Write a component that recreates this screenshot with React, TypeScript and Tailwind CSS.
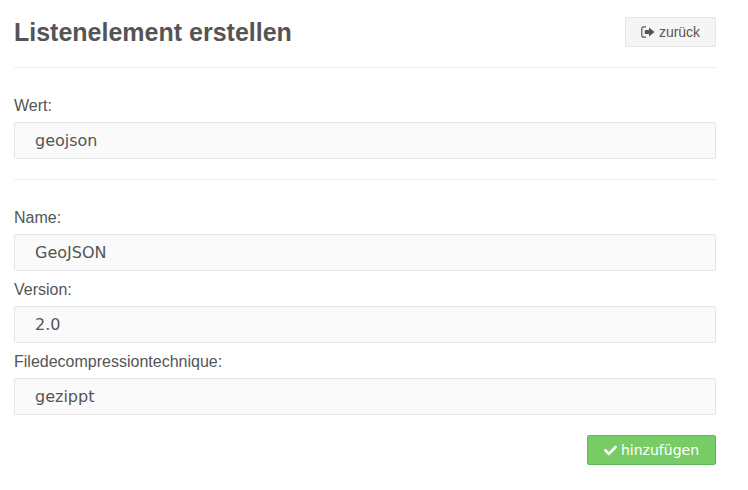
import { FaCheck } from "react-icons/fa";

// fa-sign-out (FontAwesome 4): open box with arrow pointing right
function SignOutIcon() {
  return (
    <svg viewBox="0 0 14 12" className="h-[12px] w-[14px]" fill="currentColor">
      <path d="M5 10.6H2.6c-.7 0-1.2-.5-1.2-1.2V2.6c0-.7.5-1.2 1.2-1.2H5V.2H2.6C1.2.2.2 1.2.2 2.6v6.8c0 1.4 1 2.4 2.4 2.4H5z" />
      <path d="M8 1.6 13.6 6 8 10.4V8H3.8V4H8z" />
    </svg>
  );
}

function Field({ label, value }: { label: string; value: string }) {
  return (
    <div>
      <label className="block h-[23px] text-[16px] leading-[23px] text-[#555]">{label}</label>
      <input
        readOnly
        value={value}
        className="mt-[5px] block h-[37px] w-full rounded-[2px] border border-[#e5e5e5] bg-[#fafafa] px-[20px] font-['DejaVu_Sans',sans-serif] text-[16px] text-[#555] outline-none"
      />
    </div>
  );
}

export default function App() {
  return (
    <div className="h-[490px] w-[748px] overflow-hidden bg-white px-[14px] pr-[32px] pt-[17px] font-['Liberation_Sans',sans-serif]">
      <div className="flex items-start justify-between">
        <h1 className="text-[25px] font-bold leading-[30px] text-[#555]">Listenelement erstellen</h1>
        <button className="flex h-[30px] w-[91px] items-center justify-center gap-[4px] rounded-[2px] border border-[#e5e5e5] bg-[#f5f5f5] text-[14px] text-[#555]">
          <SignOutIcon />
          zurück
        </button>
      </div>
      <hr className="mt-[20px] border-t border-[#eee]" />
      <div className="mt-[26px]">
        <Field label="Wert:" value="geojson" />
      </div>
      <hr className="mt-[20px] border-t border-[#eee]" />
      <div className="mt-[26px] flex flex-col gap-[7px]">
        <Field label="Name:" value="GeoJSON" />
        <Field label="Version:" value="2.0" />
        <Field label="Filedecompressiontechnique:" value="gezippt" />
      </div>
      <div className="mt-[20px] flex justify-end">
        <button className="flex h-[30px] w-[129px] items-center justify-center gap-[4px] rounded-[2px] border border-[#5cb85c] bg-[#77cc66] font-['DejaVu_Sans',sans-serif] text-[14px] text-white">
          <FaCheck className="h-[13px] w-[13px]" />
          hinzufügen
        </button>
      </div>
    </div>
  );
}
